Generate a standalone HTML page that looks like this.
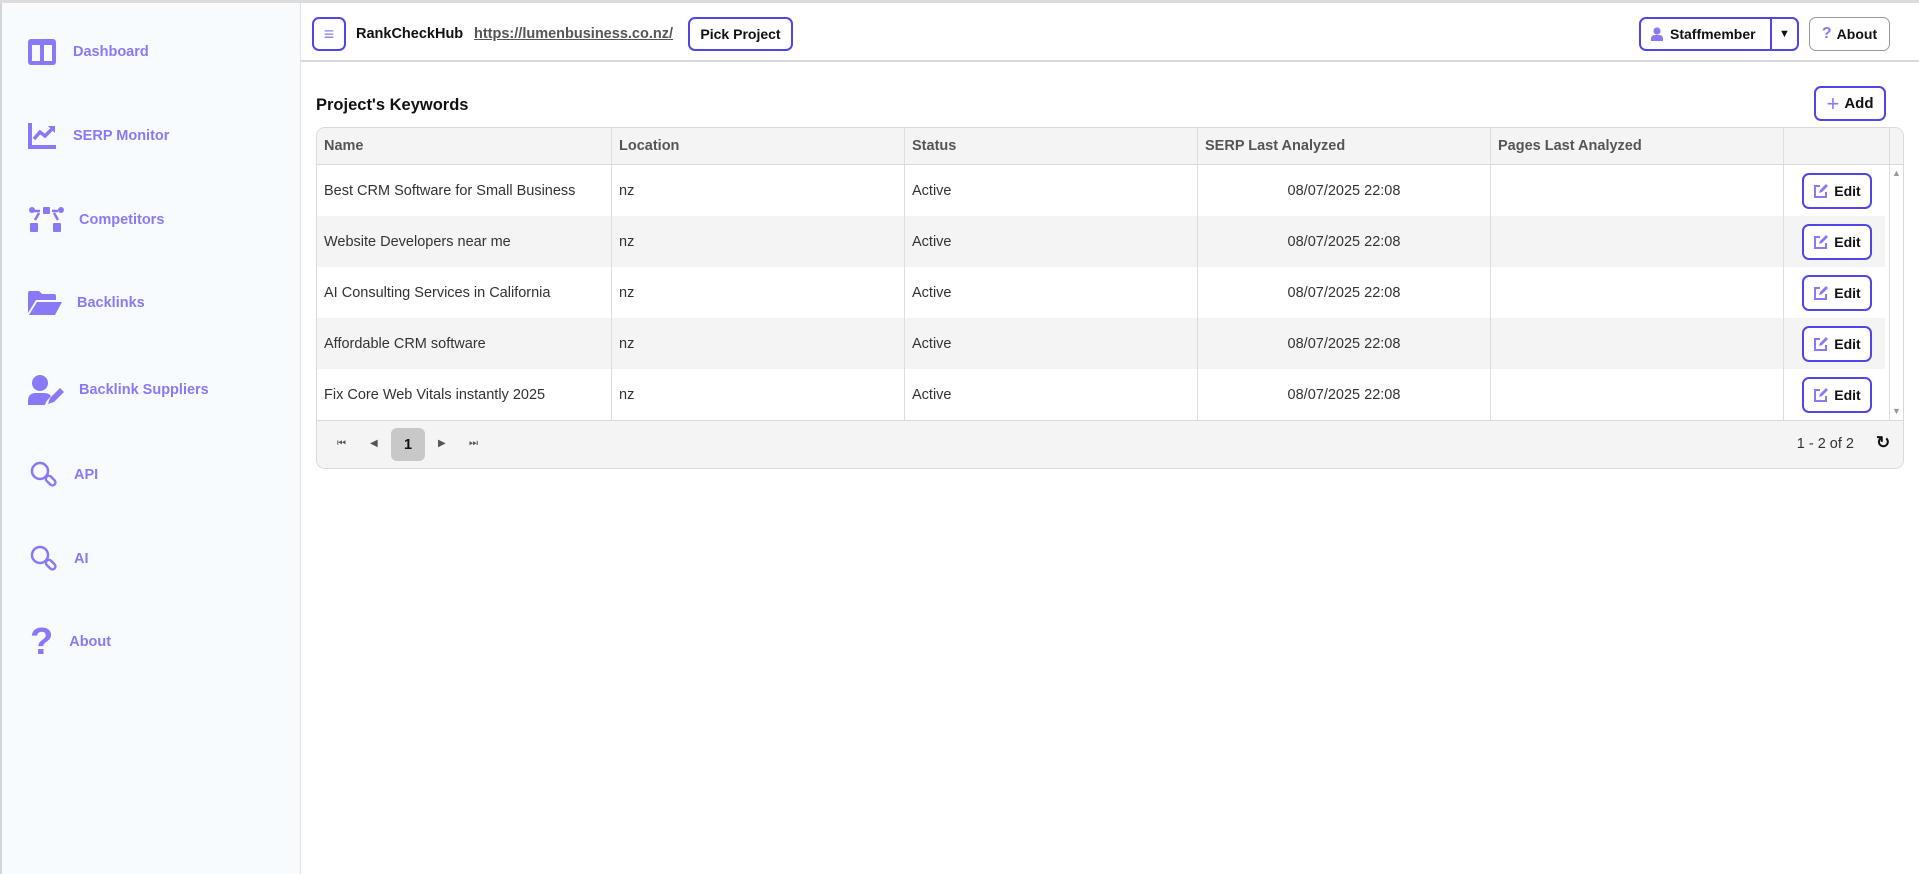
<!DOCTYPE html>
<html><head><meta charset="utf-8"><style>
*{box-sizing:border-box;margin:0;padding:0}
body{width:1919px;height:874px;overflow:hidden;font-family:"Liberation Sans",sans-serif;background:#fff;position:relative;color:#222}
.top{position:absolute;left:0;top:0;width:1919px;height:3px;background:#dcdcdc}
.side{position:absolute;left:0;top:3px;width:301px;height:871px;background:#f7fbfe;border-right:1px solid #dfe3e8;border-left:2px solid #d4d4d4}
.item{position:absolute;display:flex;align-items:center;color:#8a79f7;font-weight:bold;font-size:14.5px}
.fill{fill:#8a79f7}
.hdr{position:absolute;left:301px;top:3px;right:0;height:59px;border-bottom:2px solid #d9d9d9}
.btn{position:absolute;border:2px solid #4f46e5;border-radius:7px;background:#fff;font-weight:bold;font-size:14px;color:#111;display:flex;align-items:center;justify-content:center}
.tbl{position:absolute;left:316px;top:127px;width:1588px;height:342px;border:1px solid #d9d9d9;border-radius:9px;overflow:hidden;background:#fff}
.row{position:absolute;left:0;width:1568px;height:51px;font-size:14.5px;color:#333}
.row div,.th div{position:absolute;top:0;height:100%;display:flex;align-items:center;padding-left:7px;border-right:1px solid #ddd}
.th{position:absolute;left:0;top:0;width:1588px;height:37px;background:#f4f4f4;border-bottom:1px solid #d9d9d9;font-weight:bold;font-size:14.5px;color:#555}
.c1{left:0;width:295px}.c2{left:295px;width:293px}.c3{left:588px;width:293px}.c4{left:881px;width:293px;justify-content:center;padding:0!important}.c5{left:1174px;width:293px}.c6{left:1467px;width:106px}
.edit{position:absolute;left:1485px;width:70px;height:36px;top:8px;border:2px solid #4f46e5;border-radius:7px;font-weight:bold;font-size:14px;color:#111;display:flex;align-items:center;justify-content:center;gap:6px;background:#fff}
.foot{position:absolute;left:0;top:292px;width:1588px;height:50px;background:#f4f4f4;border-top:1px solid #d9d9d9;font-size:14.5px;color:#333}
</style></head><body>
<div class="top"></div>
<div class="side">
 <div class="item" style="left:26px;top:36px"><svg width="28" height="26" viewBox="0 0 28 26"><rect class="fill" x="0" y="0" width="28" height="26" rx="3"/><rect x="4" y="6" width="8" height="16" fill="#f7fbfe"/><rect x="16" y="6" width="8" height="16" fill="#f7fbfe"/></svg><span style="margin-left:17px">Dashboard</span></div>
 <div class="item" style="left:26px;top:120px"><svg width="28" height="26" viewBox="0 0 28 26"><path class="fill" d="M0 0h4v22h24v4H0z"/><path d="M6 16l6-7 5 4 8-8" stroke="#8a79f7" stroke-width="3.5" fill="none"/><path class="fill" d="M20 3h7v7z"/></svg><span style="margin-left:17px">SERP Monitor</span></div>
 <div class="item" style="left:26px;top:204px"><svg width="36" height="26" viewBox="0 0 36 26"><g class="fill"><rect x="15" y="0" width="7" height="7" rx="1"/><circle cx="4" cy="3" r="3"/><circle cx="33" cy="3" r="3"/><rect x="2" y="16" width="8" height="9" rx="1"/><rect x="25" y="16" width="8" height="9" rx="1"/></g><path d="M6 4l6 0M7 13l4-7M30 13l-4-7M24 4l6 0" stroke="#8a79f7" stroke-width="2.5"/></svg><span style="margin-left:15px">Competitors</span></div>
 <div class="item" style="left:26px;top:288px"><svg width="34" height="24" viewBox="0 0 34 24"><g class="fill"><path d="M0 2q0-2 2-2h9l3 3h12q2 0 2 2v4H8L0 22z"/><path d="M9 11h25l-7 13H1z"/></g></svg><span style="margin-left:15px">Backlinks</span></div>
 <div class="item" style="left:26px;top:372px"><svg width="36" height="30" viewBox="0 0 36 30"><g class="fill"><circle cx="12" cy="8" r="8"/><path d="M0 30v-4q0-8 8-8h8q5 0 7 3L18 27l-1 3z"/><path d="M20 29l2-6 10-10 4 4-10 10z"/></g></svg><span style="margin-left:15px">Backlink Suppliers</span></div>
 <div class="item" style="left:28px;top:458px"><svg width="28" height="28" viewBox="0 0 28 28" style="fill:none" stroke="#8a79f7" stroke-width="2.5"><circle cx="10" cy="10" r="8"/><rect x="15" y="17" width="11" height="6" rx="3" transform="rotate(45 21 20)"/></svg><span style="margin-left:16px">API</span></div>
 <div class="item" style="left:28px;top:542px"><svg width="28" height="28" viewBox="0 0 28 28" style="fill:none" stroke="#8a79f7" stroke-width="2.5"><circle cx="10" cy="10" r="8"/><rect x="15" y="17" width="11" height="6" rx="3" transform="rotate(45 21 20)"/></svg><span style="margin-left:16px">AI</span></div>
 <div class="item" style="left:28px;top:624px"><span style="font-size:38px;font-weight:900;color:#8a79f7;line-height:30px">?</span><span style="margin-left:16px">About</span></div>
</div>
<div class="hdr"></div>
<div class="btn" style="left:312px;top:17px;width:34px;height:34px;font-size:18px;color:#8a79f7">≡</div>
<div style="position:absolute;left:356px;top:26px;font-weight:bold;font-size:14.5px;color:#111">RankCheckHub</div>
<div style="position:absolute;left:474px;top:26px;font-weight:bold;font-size:14.5px;color:#555;text-decoration:underline">https://lumenbusiness.co.nz/</div>
<div class="btn" style="left:688px;top:17px;width:105px;height:34px">Pick Project</div>
<div class="btn" style="left:1639px;top:17px;width:160px;height:34px;justify-content:flex-start"><span style="display:flex;align-items:center;padding-left:10px;width:131px;border-right:2px solid #4f46e5;height:100%"><svg width="12" height="14" viewBox="0 0 12 14" fill="#8a79f7"><circle cx="6" cy="4" r="3.6"/><path d="M0 14v-2q0-4 4-4h4q4 0 4 4v2z"/></svg><span style="margin-left:7px">Staffmember</span></span><span style="flex:1;text-align:center;font-size:11px">▼</span></div>
<div class="btn" style="left:1809px;top:17px;width:81px;height:34px;border:1px solid #999"><span style="color:#8a79f7;margin-right:5px;font-size:16px">?</span>About</div>
<div style="position:absolute;left:316px;top:96px;font-weight:bold;font-size:16.5px;color:#111">Project's Keywords</div>
<div class="btn" style="left:1814px;top:86px;width:72px;height:35px;font-size:15px"><span style="color:#8a79f7;font-size:22px;margin-right:5px;font-weight:normal">+</span>Add</div>
<div class="tbl">
 <div class="th"><div class="c1">Name</div><div class="c2">Location</div><div class="c3">Status</div><div class="c4" style="justify-content:flex-start;padding-left:7px!important">SERP Last Analyzed</div><div class="c5">Pages Last Analyzed</div><div class="c6"></div></div>
 <div class="row" style="top:37px;background:#fff"><div class="c1">Best CRM Software for Small Business</div><div class="c2">nz</div><div class="c3">Active</div><div class="c4">08/07/2025 22:08</div><div class="c5"></div><div class="c6"></div><span class="edit"><svg width="15" height="15" viewBox="0 0 15 15"><path d="M7 2H2v11h11V8" fill="none" stroke="#8a79f7" stroke-width="2"/><path d="M6 9l1-3 6-6 2 2-6 6z" fill="#8a79f7"/></svg>Edit</span></div>
 <div class="row" style="top:88px;background:#f4f4f4"><div class="c1">Website Developers near me</div><div class="c2">nz</div><div class="c3">Active</div><div class="c4">08/07/2025 22:08</div><div class="c5"></div><div class="c6"></div><span class="edit"><svg width="15" height="15" viewBox="0 0 15 15"><path d="M7 2H2v11h11V8" fill="none" stroke="#8a79f7" stroke-width="2"/><path d="M6 9l1-3 6-6 2 2-6 6z" fill="#8a79f7"/></svg>Edit</span></div>
 <div class="row" style="top:139px;background:#fff"><div class="c1">AI Consulting Services in California</div><div class="c2">nz</div><div class="c3">Active</div><div class="c4">08/07/2025 22:08</div><div class="c5"></div><div class="c6"></div><span class="edit"><svg width="15" height="15" viewBox="0 0 15 15"><path d="M7 2H2v11h11V8" fill="none" stroke="#8a79f7" stroke-width="2"/><path d="M6 9l1-3 6-6 2 2-6 6z" fill="#8a79f7"/></svg>Edit</span></div>
 <div class="row" style="top:190px;background:#f4f4f4"><div class="c1">Affordable CRM software</div><div class="c2">nz</div><div class="c3">Active</div><div class="c4">08/07/2025 22:08</div><div class="c5"></div><div class="c6"></div><span class="edit"><svg width="15" height="15" viewBox="0 0 15 15"><path d="M7 2H2v11h11V8" fill="none" stroke="#8a79f7" stroke-width="2"/><path d="M6 9l1-3 6-6 2 2-6 6z" fill="#8a79f7"/></svg>Edit</span></div>
 <div class="row" style="top:241px;background:#fff"><div class="c1">Fix Core Web Vitals instantly 2025</div><div class="c2">nz</div><div class="c3">Active</div><div class="c4">08/07/2025 22:08</div><div class="c5"></div><div class="c6"></div><span class="edit"><svg width="15" height="15" viewBox="0 0 15 15"><path d="M7 2H2v11h11V8" fill="none" stroke="#8a79f7" stroke-width="2"/><path d="M6 9l1-3 6-6 2 2-6 6z" fill="#8a79f7"/></svg>Edit</span></div>
 <div style="position:absolute;left:1575px;top:40px;font-size:9px;color:#999">▲</div>
 <div style="position:absolute;left:1575px;top:278px;font-size:9px;color:#999">▼</div>
 <div class="foot">
  <span style="position:absolute;left:20px;top:17px;font-size:10px;color:#555">⏮</span>
  <span style="position:absolute;left:53px;top:17px;font-size:10px;color:#555">◀</span>
  <span style="position:absolute;left:74px;top:7px;width:34px;height:33px;background:#c8c8c8;border-radius:6px;display:flex;align-items:center;justify-content:center;font-weight:bold;color:#111">1</span>
  <span style="position:absolute;left:121px;top:17px;font-size:10px;color:#555">▶</span>
  <span style="position:absolute;left:152px;top:17px;font-size:10px;color:#555">⏭</span>
  <span style="position:absolute;right:51px;top:15px">1 - 2 of 2</span>
  <span style="position:absolute;left:1559px;top:12px;font-size:17px;font-weight:bold;color:#111">↻</span>
 </div>
</div>
</body></html>
